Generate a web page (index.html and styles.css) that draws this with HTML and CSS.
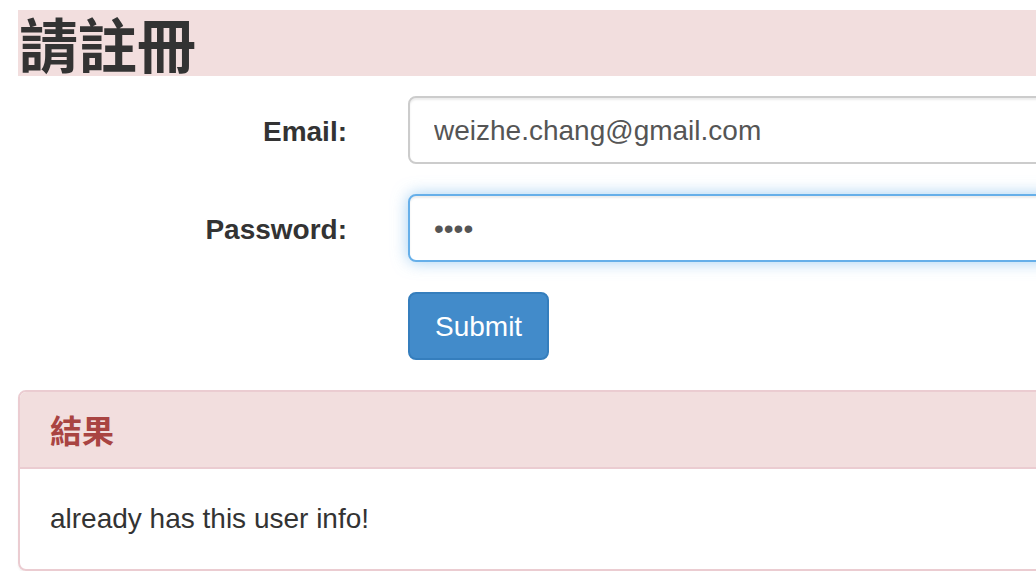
FILE: index.html
```html
<!DOCTYPE html>
<html lang="zh-Hant">
<head>
<meta charset="utf-8">
<title>請註冊</title>
<link rel="stylesheet" href="styles.css">
</head>
<body>
<div class="page">
  <h2 class="title">請註冊</h2>
  <form class="form">
    <div class="form-row">
      <label class="form-label" for="email">Email:</label>
      <input class="form-input" id="email" type="text" value="weizhe.chang@gmail.com">
    </div>
    <div class="form-row">
      <label class="form-label" for="pwd">Password:</label>
      <input class="form-input is-focus" id="pwd" type="password" value="1234">
    </div>
    <div class="form-row">
      <span class="form-label"></span>
      <div><button type="button" class="btn">Submit</button></div>
    </div>
  </form>
  <div class="panel">
    <div class="panel-heading">結果</div>
    <div class="panel-body">already has this user info!</div>
  </div>
</div>
</body>
</html>
```
FILE: styles.css
```css
html, body {
  margin: 0;
  padding: 0;
  overflow: hidden;
  background: #fff;
}
body {
  font-family: "Liberation Sans", Arial, "Noto Sans CJK TC", sans-serif;
  color: #333;
  font-size: 28px;
  line-height: 40px;
}
.page {
  width: 1400px;
  padding: 10px 0 0 18px;
}
.title {
  margin: 0;
  background: #f2dede;
  font-family: "Noto Sans CJK TC", "Liberation Sans", sans-serif;
  font-size: 59px;
  font-weight: 700;
  line-height: 66px;
  height: 66px;
  color: #333;
  padding-left: 1px;
}
.form {
  margin-top: 20px;
}
.form-row {
  display: grid;
  grid-template-columns: 329px 1fr;
  column-gap: 61px;
  align-items: center;
  margin-bottom: 30px;
}
.form-label {
  text-align: right;
  font-weight: 700;
  font-size: 28px;
  line-height: 40px;
  padding-top: 4px;
}
.form-input {
  box-sizing: border-box;
  height: 68px;
  width: 100%;
  border: 2px solid #ccc;
  border-radius: 8px;
  padding: 13px 24px 11px;
  font-family: "Liberation Sans", Arial, sans-serif;
  font-size: 28px;
  color: #555;
  background: #fff;
  box-shadow: inset 0 2px 2px rgba(0,0,0,.075);
  outline: none;
}
.form-input.is-focus {
  border-color: #66afe9;
  box-shadow: inset 0 2px 2px rgba(0,0,0,.075), 0 0 16px rgba(102,175,233,.6);
}
.btn {
  box-sizing: border-box;
  height: 68px;
  padding: 13px 25px 11px;
  font-family: "Liberation Sans", Arial, sans-serif;
  font-size: 28px;
  line-height: 40px;
  color: #fff;
  background: #428bca;
  border: 2px solid #357ebd;
  border-radius: 8px;
}
.panel {
  margin-top: 1px;
  border: 2px solid #ebccd1;
  border-radius: 8px;
  box-shadow: 0 2px 2px rgba(0,0,0,.05);
}
.panel-heading {
  background: #f2dede;
  color: #a94442;
  border-bottom: 2px solid #ebccd1;
  border-radius: 6px 6px 0 0;
  padding: 20px 30px;
  font-family: "Noto Sans CJK TC", "Liberation Sans", sans-serif;
  font-size: 32px;
  font-weight: 700;
  line-height: 35px;
}
.panel-body {
  padding: 30px;
  font-size: 28px;
  line-height: 40px;
  color: #333;
}
```
